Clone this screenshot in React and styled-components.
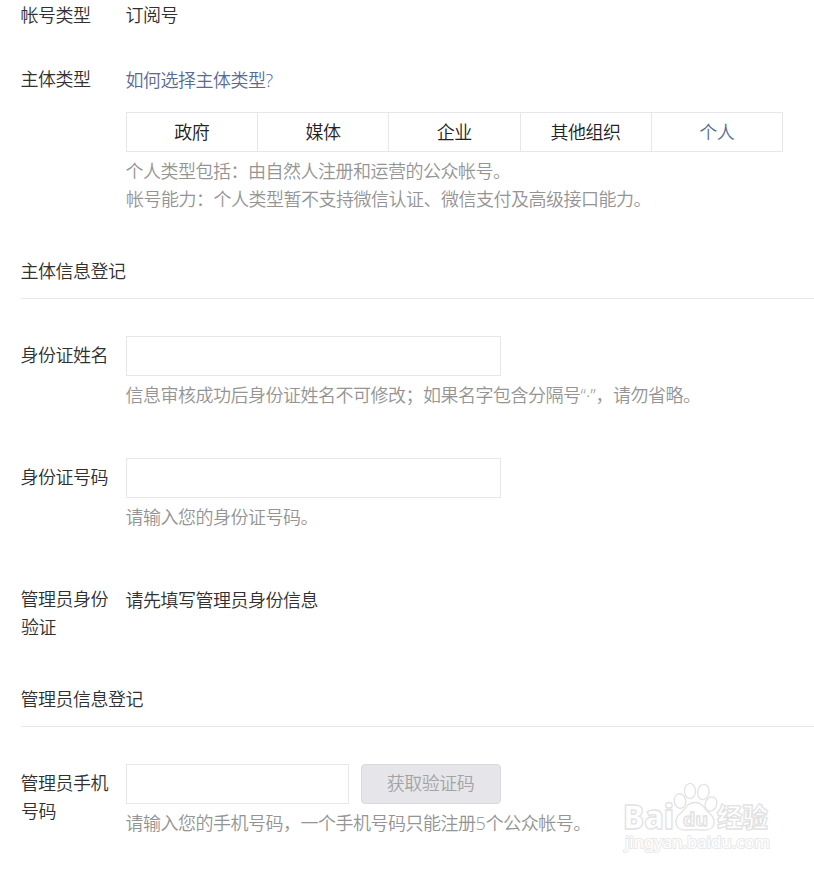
import React from 'react'
import styled, { createGlobalStyle } from 'styled-components'

const GlobalStyle = createGlobalStyle`
  body {
    margin: 0;
    background-color: #fff;
    color: #303030;
    overflow: hidden;
  }
`

const Page = styled.main`
  position: relative;
  box-sizing: border-box;
  width: 814px;
  height: 871px;
  padding: 0 0 0 21px;
  font-family: "Noto Sans CJK SC", sans-serif;
  font-size: 18px;
  font-weight: 350;
  letter-spacing: -0.5px;
  line-height: 28px;
  text-indent: -0.5px;
`

const Row = styled.div`
  display: flex;
  align-items: flex-start;
  margin-top: ${props => props.$gap || 0}px;
`

const Label = styled.label`
  flex: 0 0 88px;
  margin-right: 17px;
  padding-top: ${props => (props.$field ? 4 : 0)}px;
`

const Content = styled.div`
  flex: 1;
  min-width: 0;
  padding-top: ${props => (props.$shift ? 1 : 0)}px;
`

const Link = styled.a`
  display: block;
  color: #576b95;
`

const Latin = styled.span`
  font-family: "Open Sans", sans-serif;
  letter-spacing: 0;
  line-height: 1;
`

const Tabs = styled.ul`
  display: flex;
  box-sizing: border-box;
  width: 657px;
  height: 40px;
  margin: 19px 0 0;
  padding: 0;
  list-style: none;
  border: 1px solid #e7e7eb;
`

const Tab = styled.li`
  flex: 1;
  text-align: center;
  line-height: 36px;
  color: ${props => (props.$active ? '#576b95' : '#222')};

  & + & {
    border-left: 1px solid #e7e7eb;
  }
`

const Tip = styled.p`
  margin: 4px 0 0;
  color: #949494;
  white-space: nowrap;
`

const SectionTitle = styled.h2`
  height: 42px;
  margin: ${props => props.$gap}px 0 37px;
  border-bottom: 1px solid #e7e7eb;
  font-size: inherit;
  font-weight: inherit;
`

const Input = styled.input`
  display: block;
  box-sizing: border-box;
  width: ${props => props.$width || 375}px;
  height: 40px;
  padding: 0 12px;
  border: 1px solid #e7e7eb;
  background-color: #fff;
  font: inherit;
  outline: none;
`

const InputGroup = styled.div`
  display: flex;
  gap: 12px;
`

const CodeButton = styled.button`
  box-sizing: border-box;
  width: 140px;
  height: 40px;
  padding: 0 1px 4px 0;
  border: 1px solid #dadade;
  border-radius: 4px;
  background-color: #e6e6ea;
  color: #a3a3a3;
  font: inherit;
  letter-spacing: inherit;
`

const Watermark = styled.svg`
  position: absolute;
  left: 618px;
  top: 778px;
  letter-spacing: 0;
`

const types = ['政府', '媒体', '企业', '其他组织', '个人']

function BaiduMark() {
  return (
    <Watermark width="160" height="80" viewBox="0 0 160 80" fill="#fff" stroke="#e2e2e2" strokeWidth="1.3">
      <text x="5" y="51" fontFamily="Open Sans, sans-serif" fontSize="33" fontWeight="800" textLength="51" lengthAdjust="spacingAndGlyphs">Bai</text>
      <ellipse cx="62" cy="23" rx="5.7" ry="7.3" transform="rotate(-12 62 23)" />
      <ellipse cx="72" cy="13" rx="5.5" ry="7.7" />
      <ellipse cx="85.3" cy="14" rx="5.7" ry="7.7" transform="rotate(10 85.3 14)" />
      <ellipse cx="93" cy="26" rx="5.7" ry="7.3" transform="rotate(18 93 26)" />
      <path d="M77 24.500c-7 0-9 5-12 8.500-4 4-7.500 6-7 12 .5 5 5 7.500 11 7 6-.7 10-.7 16 0 6 .5 10.500-2 11-7 .5-6-3-8-7-12-3-3.500-5-8.500-12-8.500z" />
      <text x="65" y="47.500" fontFamily="Open Sans, sans-serif" fontSize="17" fontWeight="700" textLength="25" lengthAdjust="spacingAndGlyphs">du</text>
      <text x="99" y="49" fontFamily="Noto Sans CJK SC, sans-serif" fontSize="26" fontWeight="900" textLength="51" lengthAdjust="spacingAndGlyphs">经验</text>
      <text x="7" y="70" fontFamily="Noto Sans, sans-serif" fontSize="17" fontWeight="400" strokeWidth="2" stroke="#e8e8e8" paintOrder="stroke" textLength="145" lengthAdjust="spacingAndGlyphs">jingyan.baidu.com</text>
    </Watermark>
  )
}

export default function App() {
  return (
    <>
      <GlobalStyle />
      <Page>
        <Row>
          <Label>帐号类型</Label>
          <Content>订阅号</Content>
        </Row>

        <Row $gap={36}>
          <Label>主体类型</Label>
          <Content $shift>
            <Link>如何选择主体类型<Latin>?</Latin></Link>
            <Tabs>
              {types.map(type => (
                <Tab key={type} $active={type === '个人'}>{type}</Tab>
              ))}
            </Tabs>
            <Tip>
              个人类型包括：由自然人注册和运营的公众帐号。<br />
              帐号能力：个人类型暂不支持微信认证、微信支付及高级接口能力。
            </Tip>
          </Content>
        </Row>

        <SectionTitle $gap={44}>主体信息登记</SectionTitle>

        <Row>
          <Label $field>身份证姓名</Label>
          <Content>
            <Input />
            <Tip>信息审核成功后身份证姓名不可修改；如果名字包含分隔号<Latin>“·”</Latin>，请勿省略。</Tip>
          </Content>
        </Row>

        <Row $gap={50}>
          <Label $field>身份证号码</Label>
          <Content>
            <Input />
            <Tip>请输入您的身份证号码。</Tip>
          </Content>
        </Row>

        <Row $gap={54}>
          <Label>管理员身份验证</Label>
          <Content $shift>请先填写管理员身份信息</Content>
        </Row>

        <SectionTitle $gap={44}>管理员信息登记</SectionTitle>

        <Row>
          <Label $field>管理员手机号码</Label>
          <Content>
            <InputGroup>
              <Input $width={223} />
              <CodeButton disabled>获取验证码</CodeButton>
            </InputGroup>
            <Tip>请输入您的手机号码，一个手机号码只能注册<Latin>5</Latin>个公众帐号。</Tip>
          </Content>
        </Row>

        <BaiduMark />
      </Page>
    </>
  )
}
